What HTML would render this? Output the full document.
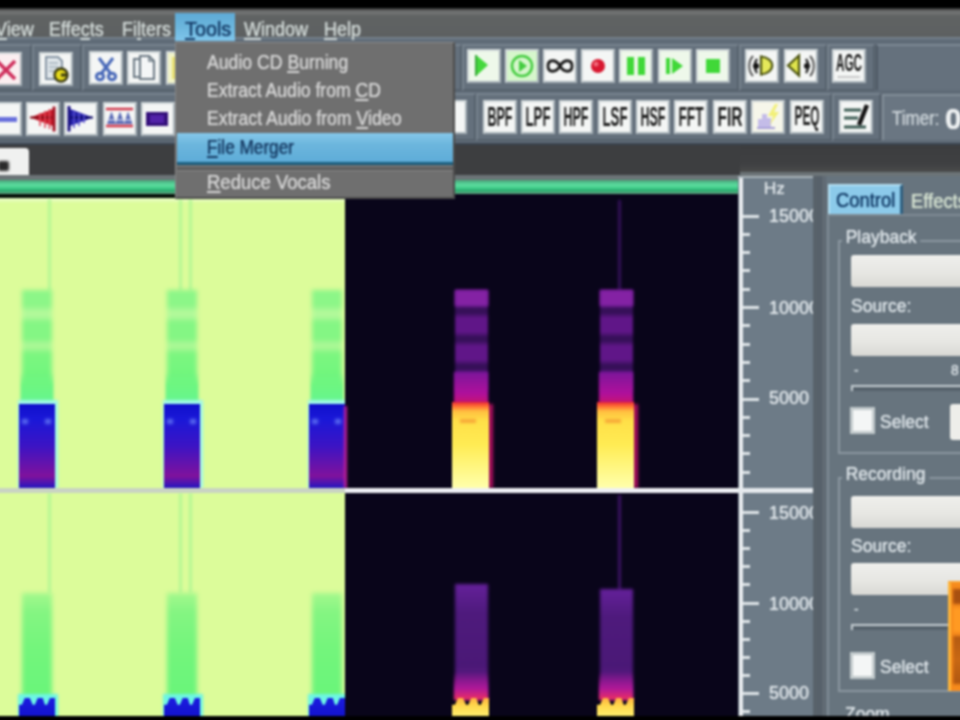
<!DOCTYPE html>
<html>
<head>
<meta charset="utf-8">
<title>Audio Editor</title>
<style>
html,body{margin:0;padding:0;background:#000;}
body{width:960px;height:720px;overflow:hidden;position:relative;font-family:"Liberation Sans",sans-serif;}
#app{position:absolute;left:-20px;top:-20px;width:1000px;height:760px;overflow:hidden;background:#000;filter:blur(1px);}
#inner{position:absolute;left:20px;top:20px;width:960px;height:720px;}
.abs{position:absolute;}
/* menubar */
#menubar{left:-20px;top:8px;width:1000px;height:30px;background:linear-gradient(#2a2a2a 0px,#6c6e6e 3px,#727474 5px,#606363 8px,#5d6061 100%);}
.mi{text-shadow:0 0 1px currentColor;position:absolute;top:18px;height:22px;line-height:22px;font-size:20px;color:#d2dad8;white-space:nowrap;transform-origin:0 50%;transform:scaleX(0.9);}
.mi u{text-decoration-thickness:2px;text-underline-offset:2px;}
/* toolbars */
#tbarea{left:-20px;top:37px;width:1000px;height:106px;background:#5f6b77;border-top:2px solid #74808b;box-sizing:border-box;}
.grp{position:absolute;box-sizing:border-box;border:2px solid #56616c;border-top-color:#77838e;border-left-color:#77838e;background:#64707c;}
.btn{position:absolute;width:34px;height:34px;box-sizing:border-box;background:#f4f6f5;border:2px solid #cfd6d8;border-right-color:#a9b3b9;border-bottom-color:#a9b3b9;overflow:hidden;}
.btn svg{position:absolute;left:-2px;top:-2px;width:34px;height:34px;}
.btn span{position:absolute;left:-2px;top:-2px;width:34px;height:34px;line-height:34px;text-align:center;font-size:19px;color:#222;letter-spacing:-1.5px;transform:scaleX(0.72);font-family:"Liberation Mono","Liberation Sans",monospace;font-weight:bold;}
/* tab row */
#tabrow{left:-20px;top:143px;width:1000px;height:29px;background:linear-gradient(#3c3d3f,#3f4042 70%,#4a4b4b);border-top:2px solid #3a444f;box-sizing:border-box;}
#tabrowL{left:-20px;top:143px;width:760px;height:32px;background:#3d3e40;border-top:2px solid #3a444f;box-sizing:border-box;}
#tab1{left:-20px;top:148px;width:49px;height:27px;background:#f0f1f0;border-radius:0 4px 0 0;}
#strip{left:-20px;top:172px;width:1000px;height:8px;background:#6c7477;}
#gbar{left:-20px;top:180px;width:758px;height:14px;background:linear-gradient(#4a9c76 0%,#50c48e 18%,#5cdc9e 38%,#40cc8a 58%,#2aa86c 78%,#6aa486 100%);}
#gline{left:-20px;top:194px;width:758px;height:4px;background:#050f08;}
/* spectrogram */
#specL{left:-20px;top:197.5px;width:365px;height:519px;background:linear-gradient(#e8fcc4 0px,#e4fcb4 3px,#dcfc9a 5px,#dcfc9a 100%);}
#specR{left:345px;top:194px;width:393px;height:522px;background:#09051a;}
#divL{left:-20px;top:488px;width:365px;height:5px;background:#c9d3c3;}
#divR{left:345px;top:488px;width:470px;height:5px;background:#eef0f4;}
/* ruler */
#ruler{left:738px;top:176px;width:75px;height:540px;background:#6d7b87;border-top:2px solid #aab4ba;box-sizing:border-box;}
#rline{left:739px;top:178px;width:4px;height:538px;background:#e9edf0;}
.tk{position:absolute;left:743px;height:3px;background:#dfe5e8;}
.tk.M{width:16px;}
.tk.m{width:7px;}
.rl{text-shadow:0 0 1px currentColor;position:absolute;left:769px;width:43.5px;overflow:hidden;height:20px;line-height:20px;font-size:18px;color:#e2e8ec;white-space:nowrap;}
/* panel */
#sep{left:813px;top:176px;width:14px;height:540px;background:linear-gradient(90deg,#59636b,#56606a 60%,#646e77 75%,#5a646d);}
#panel{left:826px;top:176px;width:154px;height:540px;background:#67747e;}
.lbl{text-shadow:0 0 1px currentColor;position:absolute;font-size:19px;color:#dfe6ea;white-space:nowrap;height:22px;line-height:22px;transform-origin:0 50%;transform:scaleX(0.92);}
.combo{position:absolute;left:851px;width:129px;height:32px;background:linear-gradient(#efefec,#e6e6e2 60%,#d8d8d4);border-radius:3px 0 0 3px;}
.gb{position:absolute;border:2px solid #8b97a0;border-right:none;box-sizing:border-box;}
.slider{position:absolute;left:851px;width:129px;height:6px;background:#56626c;border-top:2px solid #c5cdd2;border-left:2px solid #c5cdd2;box-sizing:border-box;}
.chk{position:absolute;left:850px;width:25px;height:27px;background:#f4f6f6;border:3px solid #c2cacc;box-sizing:border-box;}
/* dropdown */
#dd{left:175px;top:42px;width:280px;height:157px;background:#6f6f6f;border:1px solid #888;border-right:2px solid #4c4c4c;border-bottom:2px solid #4c4c4c;box-sizing:border-box;}
.di{text-shadow:0 0 1px currentColor;position:absolute;left:207px;height:24px;line-height:24px;font-size:20px;color:#d6d6d6;white-space:nowrap;transform-origin:0 50%;transform:scaleX(0.9);}
.di u{text-decoration-thickness:2px;text-underline-offset:2px;}
</style>
</head>
<body>
<div id="app"><div id="inner">

<!-- MENUBAR -->
<div id="menubar" class="abs"></div>
<!-- TOOLBAR AREA -->
<div id="tbarea" class="abs"></div>
<div class="grp" style="left:-4px;top:44px;width:36px;height:47px;"></div>
<div class="grp" style="left:32px;top:44px;width:50px;height:47px;"></div>
<div class="grp" style="left:82px;top:44px;width:380px;height:47px;"></div>
<div class="grp" style="left:462px;top:44px;width:277px;height:47px;"></div>
<div class="grp" style="left:739px;top:44px;width:88px;height:47px;"></div>
<div class="grp" style="left:827px;top:44px;width:48px;height:47px;"></div>
<div class="abs" style="left:876px;top:44px;width:110px;height:46px;background:#65717d;border-top:2px solid #7d8994;border-left:2px solid #4e5964;box-sizing:border-box;"></div>
<div class="grp" style="left:-4px;top:93px;width:480px;height:48px;"></div>
<div class="grp" style="left:476px;top:93px;width:356px;height:48px;"></div>
<div class="grp" style="left:832px;top:93px;width:49px;height:48px;"></div>
<div class="abs" style="left:882px;top:94px;width:110px;height:46px;background:#6a7682;border-top:2px solid #828e98;border-left:2px solid #828e98;box-sizing:border-box;"></div>
<div class="btn" style="left:-12px;top:51.5px;width:34px;height:34px;"><svg viewBox="0 0 34 34"><rect width="34" height="34" fill="#fbeef0"/><path d="M9 9 L27 27 M9 27 L27 9" stroke="#cf2f5c" stroke-width="3.6" fill="none"/></svg></div>
<div class="btn" style="left:39px;top:51.5px;width:34px;height:34px;"><svg viewBox="0 0 34 34"><path d="M7 5h12l4 4v18H7z" fill="#dfe6ea" stroke="#8493a2" stroke-width="2"/><path d="M10 11h9M10 15h9M10 19h5" stroke="#a3b0bb" stroke-width="1.5"/><circle cx="22" cy="23" r="6.5" fill="#e4d81c" stroke="#3a3a10" stroke-width="2.4"/><path d="M22 23h6" stroke="#3a3a10" stroke-width="3"/></svg></div>
<div class="btn" style="left:89px;top:51px;width:34px;height:34px;"><svg viewBox="0 0 34 34"><path d="M10 7 L22 23 M24 7 L12 23" stroke="#4868b8" stroke-width="3" fill="none"/><ellipse cx="11" cy="25.500" rx="3.6" ry="3.2" fill="none" stroke="#4868b8" stroke-width="3"/><ellipse cx="23" cy="25.500" rx="3.6" ry="3.2" fill="none" stroke="#4868b8" stroke-width="3"/></svg></div>
<div class="btn" style="left:127px;top:51px;width:34px;height:34px;"><svg viewBox="0 0 34 34"><path d="M7 8h12v18H7z" fill="#eef2f4" stroke="#6b7883" stroke-width="2"/><path d="M13 5h9l5 5v18H13z" fill="#f4f6f7" stroke="#6b7883" stroke-width="2"/><path d="M22 5v5h5" fill="none" stroke="#6b7883" stroke-width="1.5"/></svg></div>
<div class="btn" style="left:166px;top:51px;width:34px;height:34px;"><svg viewBox="0 0 34 34"><rect x="0" y="0" width="34" height="34" fill="#f2f4c8"/><rect x="6" y="6" width="20" height="22" fill="#e8e070"/></svg></div>
<div class="btn" style="left:467px;top:49px;width:34px;height:34px;"><svg viewBox="0 0 34 34"><rect width="34" height="34" fill="#eef8ea"/><path d="M9 6 L21 16 L9 27 Z" fill="#44d83c"/><path d="M9 6v21" stroke="#38a838" stroke-width="2"/></svg></div>
<div class="btn" style="left:505px;top:49px;width:34px;height:34px;"><svg viewBox="0 0 34 34"><rect width="34" height="34" fill="#d6f6cc"/><circle cx="17" cy="17" r="10" fill="none" stroke="#44cc40" stroke-width="2.5"/><path d="M14 11 L22 17 L14 23 Z" fill="#44cc40"/></svg></div>
<div class="btn" style="left:543px;top:49px;width:34px;height:34px;"><svg viewBox="0 0 34 34"><path d="M17 17 C13 10 5 10 5 17 C5 24 13 24 17 17 C21 10 29 10 29 17 C29 24 21 24 17 17 Z" fill="none" stroke="#1c1c1c" stroke-width="2.8"/></svg></div>
<div class="btn" style="left:581px;top:49px;width:34px;height:34px;"><svg viewBox="0 0 34 34"><circle cx="17" cy="17" r="7" fill="#d81830"/><circle cx="15" cy="15" r="2.5" fill="#f06878"/></svg></div>
<div class="btn" style="left:619px;top:49px;width:34px;height:34px;"><svg viewBox="0 0 34 34"><rect width="34" height="34" fill="#eef8ea"/><rect x="8" y="8" width="7" height="18" fill="#40d838"/><rect x="19" y="8" width="7" height="18" fill="#40d838"/></svg></div>
<div class="btn" style="left:658px;top:49px;width:34px;height:34px;"><svg viewBox="0 0 34 34"><rect width="34" height="34" fill="#eef8ea"/><path d="M10 9v16" stroke="#40d838" stroke-width="4"/><path d="M14 9 L25 17 L14 25 Z" fill="#40d838"/></svg></div>
<div class="btn" style="left:696px;top:49px;width:34px;height:34px;"><svg viewBox="0 0 34 34"><rect width="34" height="34" fill="#eef8ea"/><rect x="10" y="10" width="14" height="14" fill="#40d838"/></svg></div>
<div class="btn" style="left:745px;top:49px;width:34px;height:34px;"><svg viewBox="0 0 34 34"><path d="M8 7 C3 12 3 22 8 27" stroke="#555" stroke-width="2" fill="none"/><path d="M12 10 C9 14 9 20 12 24" stroke="#222" stroke-width="2.2" fill="none"/><circle cx="11" cy="17" r="3" fill="#111"/><path d="M16 7.500 C31 9 31 24 16 25.500 Z" fill="#e4e85a" stroke="#4a5210" stroke-width="2.2"/></svg></div>
<div class="btn" style="left:784px;top:49px;width:34px;height:34px;"><svg viewBox="0 0 34 34"><path d="M4 16.500 L15 6.500 V26.500 Z" fill="#dfe44e" stroke="#4a5210" stroke-width="2.2"/><circle cx="23" cy="17" r="3" fill="#111"/><path d="M22 10 C25 14 25 20 22 24" stroke="#222" stroke-width="2.2" fill="none"/><path d="M26 7 C31 12 31 22 26 27" stroke="#555" stroke-width="2" fill="none"/></svg></div>
<div class="btn" style="left:832px;top:49px;width:34px;height:34px;"><svg viewBox="0 0 34 34"><text x="17" y="22" text-anchor="middle" textLength="26" lengthAdjust="spacingAndGlyphs" font-family="Liberation Sans, sans-serif" font-weight="bold" font-size="23" fill="#161616">AGC</text><path d="M6 28h22" stroke="#9a9a9a" stroke-width="1.5" stroke-dasharray="2 1"/></svg></div>
<div class="btn" style="left:-12px;top:102px;width:34px;height:34px;"><svg viewBox="0 0 34 34"><path d="M10 17.5h19" stroke="#6870dc" stroke-width="5"/></svg></div>
<div class="btn" style="left:26px;top:102px;width:34px;height:34px;"><svg viewBox="0 0 34 34"><path d="M4 15.5 L27 7 V24 Z" fill="#c81828"/><path d="M28 4.5v25" stroke="#a01424" stroke-width="3"/><path d="M4 15.5h22" stroke="#7c0c18" stroke-width="2"/><path d="M14 11v13M19 9v17M23.500 7v20" stroke="#e04858" stroke-width="1.6"/></svg></div>
<div class="btn" style="left:64px;top:102px;width:34px;height:34px;"><svg viewBox="0 0 34 34"><path d="M29 15.5 L6 7 V24 Z" fill="#2420a8"/><path d="M5 4v25.5" stroke="#181080" stroke-width="3"/><path d="M7 15.500h22" stroke="#0c0860" stroke-width="2"/><path d="M10 8v18M15 10v14M20 12v9" stroke="#5850d0" stroke-width="1.6"/></svg></div>
<div class="btn" style="left:103px;top:101.5px;width:34px;height:34px;"><svg viewBox="0 0 34 34"><path d="M3 7h27M3 24h27" stroke="#d0384c" stroke-width="2.4"/><path d="M4 22 L8.500 9.500 L13 22 Z M12.500 22 L17 9.500 L21.500 22 Z M21 22 L25 9.500 L29.500 22 Z" fill="#5868b4"/><path d="M4 18h26" stroke="#dfe3f3" stroke-width="1.2"/></svg></div>
<div class="btn" style="left:141px;top:101.5px;width:34px;height:34px;"><svg viewBox="0 0 34 34"><rect x="5" y="10" width="22" height="14" fill="#34107a"/><rect x="9" y="13" width="14" height="8" fill="#5222a8"/></svg></div>
<div class="btn" style="left:433px;top:100px;width:34px;height:34px;"></div>
<div class="btn" style="left:483px;top:100px;width:34px;height:34px;"><svg viewBox="0 0 34 34"><text x="17" y="26" text-anchor="middle" textLength="25" lengthAdjust="spacingAndGlyphs" font-family="Liberation Sans, sans-serif" font-weight="bold" font-size="27" fill="#1c1c1c">BPF</text></svg></div>
<div class="btn" style="left:521px;top:100px;width:34px;height:34px;"><svg viewBox="0 0 34 34"><text x="17" y="26" text-anchor="middle" textLength="25" lengthAdjust="spacingAndGlyphs" font-family="Liberation Sans, sans-serif" font-weight="bold" font-size="27" fill="#1c1c1c">LPF</text></svg></div>
<div class="btn" style="left:559px;top:100px;width:34px;height:34px;"><svg viewBox="0 0 34 34"><text x="17" y="26" text-anchor="middle" textLength="25" lengthAdjust="spacingAndGlyphs" font-family="Liberation Sans, sans-serif" font-weight="bold" font-size="27" fill="#1c1c1c">HPF</text></svg></div>
<div class="btn" style="left:598px;top:100px;width:34px;height:34px;"><svg viewBox="0 0 34 34"><text x="17" y="26" text-anchor="middle" textLength="25" lengthAdjust="spacingAndGlyphs" font-family="Liberation Sans, sans-serif" font-weight="bold" font-size="27" fill="#1c1c1c">LSF</text></svg></div>
<div class="btn" style="left:636px;top:100px;width:34px;height:34px;"><svg viewBox="0 0 34 34"><text x="17" y="26" text-anchor="middle" textLength="25" lengthAdjust="spacingAndGlyphs" font-family="Liberation Sans, sans-serif" font-weight="bold" font-size="27" fill="#1c1c1c">HSF</text></svg></div>
<div class="btn" style="left:674px;top:100px;width:34px;height:34px;"><svg viewBox="0 0 34 34"><text x="17" y="26" text-anchor="middle" textLength="25" lengthAdjust="spacingAndGlyphs" font-family="Liberation Sans, sans-serif" font-weight="bold" font-size="27" fill="#1c1c1c">FFT</text></svg></div>
<div class="btn" style="left:713px;top:100px;width:34px;height:34px;"><svg viewBox="0 0 34 34"><text x="17" y="26" text-anchor="middle" textLength="25" lengthAdjust="spacingAndGlyphs" font-family="Liberation Sans, sans-serif" font-weight="bold" font-size="27" fill="#1c1c1c">FIR</text></svg></div>
<div class="btn" style="left:751px;top:100px;width:34px;height:34px;"><svg viewBox="0 0 34 34"><rect width="34" height="34" fill="#f6f6ea"/><path d="M7 27V19h4v-5h5v4h4v9z" fill="#c4bce8"/><path d="M6 28h18" stroke="#a8a0d8" stroke-width="2"/><path d="M24 4 L17 16h5l-3 9 9-13h-5l4-8z" fill="#f2f078"/></svg></div>
<div class="btn" style="left:790px;top:100px;width:34px;height:34px;"><svg viewBox="0 0 34 34"><text x="17" y="25" text-anchor="middle" textLength="25" lengthAdjust="spacingAndGlyphs" font-family="Liberation Sans, sans-serif" font-weight="bold" font-size="27" fill="#1c1c1c">PEQ</text></svg></div>
<div class="btn" style="left:839px;top:100px;width:34px;height:34px;"><svg viewBox="0 0 34 34"><path d="M5 10h17M5 18h14M5 27h22" stroke="#3c5c54" stroke-width="3"/><path d="M28 5 L20 25" stroke="#141414" stroke-width="4.5"/></svg></div>
<div class="lbl" style="left:892px;top:107px;font-size:20px;color:#cdd5da;transform:scaleX(0.85);">Timer:</div>
<div class="lbl" style="left:945px;top:103px;font-size:30px;height:32px;line-height:32px;color:#eef1f2;transform:none;font-weight:bold;">0</div>

<div class="abs" style="left:175px;top:13px;width:60px;height:28px;background:linear-gradient(#5eaad6,#6cb6dd 50%,#80c6ec);"></div>
<div class="mi" style="left:-5px;"><u>V</u>iew</div>
<div class="mi" style="left:49px;">Effe<u>c</u>ts</div>
<div class="mi" style="left:122px;">Fi<u>l</u>ters</div>
<div class="mi" style="left:185px;color:#143a66;transform:scaleX(0.99);"><u>T</u>ools</div>
<div class="mi" style="left:244px;"><u>W</u>indow</div>
<div class="mi" style="left:324px;"><u>H</u>elp</div>

<!-- TAB ROW -->
<div id="strip" class="abs"></div>
<div id="tabrow" class="abs"></div>
<div id="tabrowL" class="abs"></div>
<div id="tab1" class="abs"></div>
<div class="abs" style="left:-2px;top:161px;width:11px;height:10px;background:#2a2a2a;border-radius:2px;filter:blur(1px);"></div>
<div id="gbar" class="abs"></div>
<div id="gline" class="abs"></div>

<!-- SPECTROGRAM -->
<div id="specL" class="abs"></div>
<div id="specR" class="abs"></div>
<div class="abs" style="left:0;top:0;width:345px;height:716px;overflow:hidden;">
<div class="abs" style="left:47.5px;top:199px;width:3px;height:92px;background:#b4f794;filter:blur(0.9px);"></div>
<div class="abs" style="left:22px;top:290px;width:30px;height:114px;background:linear-gradient(#8cf688 0px,#8cf688 16px,#b2f99a 21px,#b2f99a 27px,#84f684 32px,#84f684 49px,#acf896 54px,#acf896 58px,#7cf680 63px,#72f67e 85px,#66f688 114px);filter:blur(2px);"></div>
<div class="abs" style="left:21px;top:372px;width:32px;height:32px;background:linear-gradient(rgba(112,246,126,0),#6ef680 40%,#64f690);filter:blur(1.2px);"></div>
<div class="abs" style="left:18px;top:400px;width:40px;height:88px;background:#a0f8e8;filter:blur(1px);"></div>
<div class="abs" style="left:19px;top:404px;width:36px;height:84px;background:linear-gradient(#1010cc 0%,#1a18d8 18%,#3c14c4 50%,#80129c 86%,#2416c0 100%);"></div>
<div class="abs" style="left:22px;top:419px;width:6px;height:5px;background:#5a6cf0;filter:blur(1.5px);"></div>
<div class="abs" style="left:45px;top:419px;width:6px;height:5px;background:#5a6cf0;filter:blur(1.5px);"></div>
<div class="abs" style="left:178.5px;top:199px;width:3px;height:92px;background:#b4f794;filter:blur(0.9px);"></div>
<div class="abs" style="left:188.5px;top:199px;width:3px;height:92px;background:#b4f794;filter:blur(0.9px);"></div>
<div class="abs" style="left:167px;top:290px;width:30px;height:114px;background:linear-gradient(#8cf688 0px,#8cf688 16px,#b2f99a 21px,#b2f99a 27px,#84f684 32px,#84f684 49px,#acf896 54px,#acf896 58px,#7cf680 63px,#72f67e 85px,#66f688 114px);filter:blur(2px);"></div>
<div class="abs" style="left:166px;top:372px;width:32px;height:32px;background:linear-gradient(rgba(112,246,126,0),#6ef680 40%,#64f690);filter:blur(1.2px);"></div>
<div class="abs" style="left:163px;top:400px;width:40px;height:88px;background:#a0f8e8;filter:blur(1px);"></div>
<div class="abs" style="left:164px;top:404px;width:36px;height:84px;background:linear-gradient(#1010cc 0%,#1a18d8 18%,#3c14c4 50%,#80129c 86%,#2416c0 100%);"></div>
<div class="abs" style="left:167px;top:419px;width:6px;height:5px;background:#5a6cf0;filter:blur(1.5px);"></div>
<div class="abs" style="left:190px;top:419px;width:6px;height:5px;background:#5a6cf0;filter:blur(1.5px);"></div>
<div class="abs" style="left:312px;top:290px;width:30px;height:114px;background:linear-gradient(#8cf688 0px,#8cf688 16px,#b2f99a 21px,#b2f99a 27px,#84f684 32px,#84f684 49px,#acf896 54px,#acf896 58px,#7cf680 63px,#72f67e 85px,#66f688 114px);filter:blur(2px);"></div>
<div class="abs" style="left:311px;top:372px;width:32px;height:32px;background:linear-gradient(rgba(112,246,126,0),#6ef680 40%,#64f690);filter:blur(1.2px);"></div>
<div class="abs" style="left:308px;top:400px;width:40px;height:88px;background:#a0f8e8;filter:blur(1px);"></div>
<div class="abs" style="left:309px;top:404px;width:36px;height:84px;background:linear-gradient(#1010cc 0%,#1a18d8 18%,#3c14c4 50%,#80129c 86%,#2416c0 100%);"></div>
<div class="abs" style="left:312px;top:419px;width:6px;height:5px;background:#5a6cf0;filter:blur(1.5px);"></div>
<div class="abs" style="left:335px;top:419px;width:6px;height:5px;background:#5a6cf0;filter:blur(1.5px);"></div>
<div class="abs" style="left:47.5px;top:493px;width:3px;height:100px;background:#b4f794;filter:blur(0.9px);"></div>
<div class="abs" style="left:22px;top:593px;width:30px;height:108px;background:linear-gradient(#a4f88c,#84f582 18%,#74f57c 50%,#68f57a);filter:blur(2px);"></div>
<div class="abs" style="left:18px;top:694px;width:40px;height:23px;background:#6cf6e4;filter:blur(1px);"></div>
<div class="abs" style="left:19px;top:698px;width:36px;height:19px;background:linear-gradient(#1c1ce0,#1212cc);clip-path:polygon(0 35%,8% 35%,16% 0,30% 0,38% 35%,44% 35%,52% 0,66% 0,72% 35%,78% 35%,86% 0,100% 0,100% 100%,0 100%);"></div>
<div class="abs" style="left:178.5px;top:493px;width:3px;height:100px;background:#b4f794;filter:blur(0.9px);"></div>
<div class="abs" style="left:188.5px;top:493px;width:3px;height:100px;background:#b4f794;filter:blur(0.9px);"></div>
<div class="abs" style="left:167px;top:593px;width:30px;height:108px;background:linear-gradient(#a4f88c,#84f582 18%,#74f57c 50%,#68f57a);filter:blur(2px);"></div>
<div class="abs" style="left:163px;top:694px;width:40px;height:23px;background:#6cf6e4;filter:blur(1px);"></div>
<div class="abs" style="left:164px;top:698px;width:36px;height:19px;background:linear-gradient(#1c1ce0,#1212cc);clip-path:polygon(0 35%,8% 35%,16% 0,30% 0,38% 35%,44% 35%,52% 0,66% 0,72% 35%,78% 35%,86% 0,100% 0,100% 100%,0 100%);"></div>
<div class="abs" style="left:312px;top:593px;width:30px;height:108px;background:linear-gradient(#a4f88c,#84f582 18%,#74f57c 50%,#68f57a);filter:blur(2px);"></div>
<div class="abs" style="left:308px;top:694px;width:40px;height:23px;background:#6cf6e4;filter:blur(1px);"></div>
<div class="abs" style="left:309px;top:698px;width:36px;height:19px;background:linear-gradient(#1c1ce0,#1212cc);clip-path:polygon(0 35%,8% 35%,16% 0,30% 0,38% 35%,44% 35%,52% 0,66% 0,72% 35%,78% 35%,86% 0,100% 0,100% 100%,0 100%);"></div>
</div>
<div class="abs" style="left:343.5px;top:406px;width:3px;height:82px;background:#c020a0;filter:blur(1px);"></div>
<div class="abs" style="left:455px;top:290px;width:33px;height:112px;background:repeating-linear-gradient(#601688 0px,#601688 14px,#361058 19px,#361058 23px,#601688 28px);filter:blur(1.2px);"></div>
<div class="abs" style="left:455px;top:290px;width:33px;height:16px;background:#8422a4;filter:blur(1.5px);"></div>
<div class="abs" style="left:454px;top:372px;width:34px;height:31px;background:linear-gradient(#7c169a,#b0109c 70%,#c81470);filter:blur(1px);"></div>
<div class="abs" style="left:488px;top:404px;width:5px;height:84px;background:#b01060;filter:blur(1.5px);"></div>
<div class="abs" style="left:452px;top:402px;width:37px;height:86px;background:linear-gradient(#e82838 0%,#ff7034 5%,#ffc040 11%,#ffe048 22%,#ffec54 50%,#fff888 80%,#ffffac 100%);"></div>
<div class="abs" style="left:460px;top:419px;width:16px;height:4px;background:#f8a838;filter:blur(1.2px);"></div>
<div class="abs" style="left:618px;top:200px;width:3px;height:90px;background:#34125a;filter:blur(0.8px);"></div>
<div class="abs" style="left:600px;top:290px;width:33px;height:112px;background:repeating-linear-gradient(#601688 0px,#601688 14px,#361058 19px,#361058 23px,#601688 28px);filter:blur(1.2px);"></div>
<div class="abs" style="left:600px;top:290px;width:33px;height:16px;background:#8422a4;filter:blur(1.5px);"></div>
<div class="abs" style="left:599px;top:372px;width:34px;height:31px;background:linear-gradient(#7c169a,#b0109c 70%,#c81470);filter:blur(1px);"></div>
<div class="abs" style="left:633px;top:404px;width:5px;height:84px;background:#b01060;filter:blur(1.5px);"></div>
<div class="abs" style="left:597px;top:402px;width:37px;height:86px;background:linear-gradient(#e82838 0%,#ff7034 5%,#ffc040 11%,#ffe048 22%,#ffec54 50%,#fff888 80%,#ffffac 100%);"></div>
<div class="abs" style="left:605px;top:419px;width:16px;height:4px;background:#f8a838;filter:blur(1.2px);"></div>
<div class="abs" style="left:455px;top:584px;width:33px;height:116px;background:linear-gradient(#64209a,#4e1a7c 25%,#4a1876 70%,#7a1c96);filter:blur(1.8px);"></div>
<div class="abs" style="left:454px;top:672px;width:34px;height:28px;background:linear-gradient(rgba(140,28,150,0),#b01898 60%,#f03060);filter:blur(1px);"></div>
<div class="abs" style="left:452px;top:698px;width:37px;height:19px;background:linear-gradient(#ffb040,#ffd84c 40%,#fff070);clip-path:polygon(0 35%,8% 35%,16% 0,30% 0,38% 35%,44% 35%,52% 0,66% 0,72% 35%,78% 35%,86% 0,100% 0,100% 100%,0 100%);"></div>
<div class="abs" style="left:618px;top:495px;width:3px;height:95px;background:#3c1464;filter:blur(0.8px);"></div>
<div class="abs" style="left:600px;top:589px;width:33px;height:111px;background:linear-gradient(#64209a,#4e1a7c 25%,#4a1876 70%,#7a1c96);filter:blur(1.8px);"></div>
<div class="abs" style="left:599px;top:672px;width:34px;height:28px;background:linear-gradient(rgba(140,28,150,0),#b01898 60%,#f03060);filter:blur(1px);"></div>
<div class="abs" style="left:597px;top:698px;width:37px;height:19px;background:linear-gradient(#ffb040,#ffd84c 40%,#fff070);clip-path:polygon(0 35%,8% 35%,16% 0,30% 0,38% 35%,44% 35%,52% 0,66% 0,72% 35%,78% 35%,86% 0,100% 0,100% 100%,0 100%);"></div>
<div id="divL" class="abs"></div>
<div id="divR" class="abs"></div>

<!-- RULER -->
<div id="ruler" class="abs"></div>
<div id="rline" class="abs"></div>
<div class="tk M" style="top:214.5px;"></div>
<div class="tk m" style="top:232.8px;"></div>
<div class="tk m" style="top:251.1px;"></div>
<div class="tk m" style="top:269.4px;"></div>
<div class="tk m" style="top:287.7px;"></div>
<div class="tk M" style="top:306.0px;"></div>
<div class="tk m" style="top:324.3px;"></div>
<div class="tk m" style="top:342.6px;"></div>
<div class="tk m" style="top:360.9px;"></div>
<div class="tk m" style="top:379.2px;"></div>
<div class="tk M" style="top:397.5px;"></div>
<div class="tk m" style="top:415.8px;"></div>
<div class="tk m" style="top:434.1px;"></div>
<div class="tk m" style="top:452.4px;"></div>
<div class="tk m" style="top:470.7px;"></div>
<div class="tk M" style="top:511.0px;"></div>
<div class="tk m" style="top:529.1px;"></div>
<div class="tk m" style="top:547.2px;"></div>
<div class="tk m" style="top:565.3px;"></div>
<div class="tk m" style="top:583.4px;"></div>
<div class="tk M" style="top:601.5px;"></div>
<div class="tk m" style="top:619.6px;"></div>
<div class="tk m" style="top:637.7px;"></div>
<div class="tk m" style="top:655.8px;"></div>
<div class="tk m" style="top:673.9px;"></div>
<div class="tk M" style="top:692.0px;"></div>
<div class="tk m" style="top:710.1px;"></div>
<div class="rl" style="left:764px;top:179px;font-size:17px;">Hz</div>
<div class="rl" style="top:206.0px;">15000</div>
<div class="rl" style="top:297.5px;">10000</div>
<div class="rl" style="top:388.0px;">5000</div>
<div class="rl" style="top:502.5px;">15000</div>
<div class="rl" style="top:594.0px;">10000</div>
<div class="rl" style="top:683.0px;">5000</div>
<div class="abs" style="left:738px;top:488px;width:75px;height:5px;background:#e6eaee;"></div>

<!-- PANEL -->
<div id="sep" class="abs"></div>
<div id="panel" class="abs"></div>
<div class="abs" style="left:828px;top:184px;width:75px;height:31px;background:#8ccaea;border:2px solid #b4dff2;border-bottom:none;border-right:3px solid #2e5f80;box-sizing:border-box;"></div>
<div class="lbl" style="left:836px;top:189px;color:#123a66;font-size:20px;">Control</div>
<div class="lbl" style="left:911px;top:190px;color:#d9e6d4;font-size:20px;">Effects</div>
<div class="abs" style="left:827px;top:214px;width:153px;height:502px;border-left:2px solid #7f8b95;border-top:2px solid #7f8b95;box-sizing:border-box;background:#67747e;"></div>
<div class="gb" style="left:838px;top:240px;width:150px;height:214px;"></div>
<div class="lbl" style="left:842px;top:226px;background:#67747e;padding:0 4px;">Playback</div>
<div class="combo" style="top:255px;"></div>
<div class="lbl" style="left:851px;top:295px;">Source:</div>
<div class="combo" style="top:324px;"></div>
<div class="lbl" style="left:854px;top:359px;font-size:15px;">-</div>
<div class="lbl" style="left:951px;top:359px;font-size:15px;">8</div>
<div class="slider" style="top:385px;"></div>
<div class="chk" style="top:407px;"></div>
<div class="lbl" style="left:880px;top:411px;">Select</div>
<div class="abs" style="left:950px;top:404px;width:32px;height:36px;background:#eeeeea;border-radius:3px;"></div>
<div class="gb" style="left:838px;top:477px;width:150px;height:215px;"></div>
<div class="lbl" style="left:842px;top:463px;background:#67747e;padding:0 4px;">Recording</div>
<div class="combo" style="top:496px;"></div>
<div class="lbl" style="left:851px;top:535px;">Source:</div>
<div class="combo" style="top:563px;"></div>
<div class="lbl" style="left:854px;top:598px;font-size:15px;">-</div>
<div class="slider" style="top:624px;"></div>
<div class="chk" style="top:652px;"></div>
<div class="lbl" style="left:880px;top:656px;">Select</div>
<div class="lbl" style="left:845px;top:703px;">Zoom</div>
<div class="abs" style="left:948px;top:581px;width:34px;height:110px;background:#f68a1c;border-left:3px solid #ffb437;border-top:2px solid #f8a030;box-sizing:border-box;"></div>
<div class="abs" style="left:953px;top:589px;width:30px;height:15px;background:#a85010;filter:blur(1.2px);"></div>
<div class="abs" style="left:953px;top:608px;width:30px;height:24px;background:#ff9a22;filter:blur(1.2px);"></div>
<div class="abs" style="left:953px;top:636px;width:30px;height:48px;background:linear-gradient(#b45a12,#c86814 50%,#b05610);filter:blur(1.2px);"></div>

<!-- DROPDOWN -->
<div id="dd" class="abs"></div>
<div class="abs" style="left:177px;top:133px;width:276px;height:29px;background:linear-gradient(#86c8ea,#6cb6dd 40%,#5eacd8);border-bottom:3px solid #1d5f7f;"></div>
<div class="di" style="top:50px;transform:scaleX(0.882);">Audio CD <u>B</u>urning</div>
<div class="di" style="top:78px;transform:scaleX(0.879);">Extract Audio from <u>C</u>D</div>
<div class="di" style="top:106px;transform:scaleX(0.885);">Extract Audio from <u>V</u>ideo</div>
<div class="di" style="top:135px;color:#163a63;transform:scaleX(0.86);"><u>F</u>ile Merger</div>
<div class="abs" style="left:177px;top:168px;width:276px;height:2px;background:#555;border-bottom:1px solid #8a8a8a;"></div>
<div class="di" style="top:170px;transform:scaleX(0.925);"><u>R</u>educe Vocals</div>

<!-- bottom black -->
<div class="abs" style="left:-20px;top:716px;width:1000px;height:24px;background:#000;"></div>
</div></div>
</body>
</html>
